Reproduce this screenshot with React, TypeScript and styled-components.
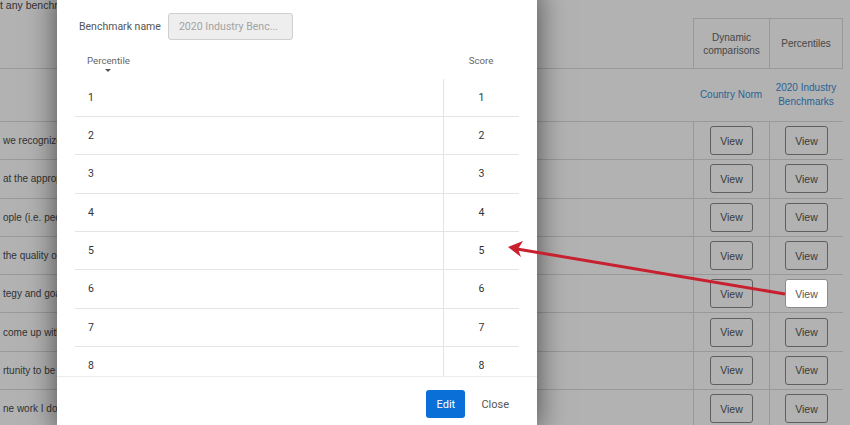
import React from 'react'
import styled, { createGlobalStyle } from 'styled-components'

const GlobalStyle = createGlobalStyle`
    body {
        margin: 0;
        overflow: hidden;
        font-family: "Liberation Sans", Arial, sans-serif;
    }
`

const Page = styled.div`
    position: relative;
    width: 850px;
    height: 425px;
    overflow: hidden;
    background: #ffffff;
`

const Intro = styled.div`
    height: 18px;
    line-height: 10px;
    font-size: 10.5px;
    color: #4a4a4a;
    white-space: nowrap;
`

const Grid = styled.div`
    display: grid;
    grid-template-columns: 693px 76px 74px;
`

const HeadRow = styled(Grid)`
    height: 51px;
    border-bottom: 1px solid #dcdcdc;
    box-sizing: border-box;
    width: 843px;
`

const HeadCell = styled.div<{ $boxed?: boolean }>`
    display: flex;
    align-items: center;
    justify-content: center;
    text-align: center;
    font-size: 10px;
    line-height: 13px;
    color: #666;
    ${(p) => p.$boxed && `
        border-top: 1px solid #dcdcdc;
        border-left: 1px solid #dcdcdc;
    `}
    &:last-child {
        border-right: 1px solid #dcdcdc;
    }
`

const LinkRow = styled(Grid)`
    height: 53px;
    width: 843px;
    border-bottom: 1px solid #dcdcdc;
    box-sizing: border-box;
`

const LinkCell = styled.div`
    display: flex;
    align-items: center;
    justify-content: center;
    text-align: center;
    font-size: 10px;
    line-height: 14px;
    color: #3b8fd6;
`

const Row = styled(Grid)`
    height: 38.3px;
    width: 843px;
    border-bottom: 1px solid #dcdcdc;
    box-sizing: border-box;
`

const TextCell = styled.div`
    display: flex;
    align-items: center;
    padding-left: 3px;
    font-size: 10px;
    color: #4a4a4a;
    white-space: nowrap;
    overflow: hidden;
`

const ViewCell = styled.div`
    display: flex;
    align-items: center;
    justify-content: center;
    border-left: 1px solid #dcdcdc;
`

const ViewButton = styled.button<{ $active?: boolean }>`
    width: 43px;
    height: 29px;
    padding: 0;
    border: 1px solid ${(p) => (p.$active ? '#8a8a8a' : '#888')};
    border-radius: 3px;
    background: #fff;
    font-family: "Liberation Sans", Arial, sans-serif;
    font-size: 10.5px;
    color: #555;
    ${(p) => p.$active && `
        position: relative;
        z-index: 2;
    `}
`

const Overlay = styled.div`
    position: absolute;
    inset: 0;
    background: rgba(0, 0, 0, 0.3);
    z-index: 1;
`

const Modal = styled.div`
    position: absolute;
    left: 57px;
    top: -10px;
    bottom: -6px;
    width: 480px;
    z-index: 3;
    background: #fff;
    box-shadow: 0 0 28px rgba(0, 0, 0, 0.6);
    display: flex;
    flex-direction: column;
    font-family: Roboto, "Noto Sans", sans-serif;
`

const NameRow = styled.div`
    display: flex;
    align-items: center;
    padding: 23px 22px 0;
`

const NameLabel = styled.label`
    font-size: 10.5px;
    color: #555;
    margin-right: 7px;
`

const NameInput = styled.div`
    width: 125px;
    height: 27px;
    box-sizing: border-box;
    padding-left: 10px;
    display: flex;
    align-items: center;
    border: 1px solid #cfcfcf;
    border-radius: 3px;
    background: #eeeeee;
    font-size: 10.6px;
    color: #a3a3a3;
`

const Table = styled.div`
    margin: 7px 18px 0;
    flex: 1;
    display: flex;
    flex-direction: column;
    min-height: 0;
`

const THead = styled.div`
    display: grid;
    grid-template-columns: 1fr 76px;
    height: 32px;
`

const Th = styled.div<{ $center?: boolean }>`
    display: flex;
    flex-direction: column;
    align-items: ${(p) => (p.$center ? 'center' : 'flex-start')};
    padding: 8px 0 0 ${(p) => (p.$center ? '0' : '12px')};
    font-size: 9.7px;
    color: #666;
`

const SortLabel = styled.span`
    display: flex;
    flex-direction: column;
    align-items: center;
    gap: 3px;
`

const SortArrow = styled.span`
    width: 0;
    height: 0;
    border-left: 3.5px solid transparent;
    border-right: 3.5px solid transparent;
    border-top: 3.5px solid #555;
`

const TBody = styled.div`
    flex: 1;
    overflow: hidden;
`

const Tr = styled.div`
    display: grid;
    grid-template-columns: 1fr 76px;
    height: 38.33px;
    border-bottom: 1px solid #e4e4e4;
    box-sizing: border-box;
    &:first-child {
        height: 38px;
    }
`

const Td = styled.div<{ $score?: boolean }>`
    display: flex;
    align-items: center;
    justify-content: ${(p) => (p.$score ? 'center' : 'flex-start')};
    padding-left: ${(p) => (p.$score ? '0' : '13px')};
    font-size: 10.5px;
    color: #333;
    ${(p) => p.$score && 'border-left: 1px solid #e4e4e4;'}
`

const Footer = styled.div`
    height: 54px;
    flex: none;
    border-top: 1px solid #ececec;
    display: flex;
    align-items: center;
    justify-content: flex-end;
    padding-right: 16px;
    gap: 4px;
`

const EditButton = styled.button`
    width: 39px;
    height: 28px;
    border: none;
    border-radius: 3px;
    background: #0b6fd8;
    color: #fff;
    font-family: Roboto, "Noto Sans", sans-serif;
    font-size: 11px;
    padding: 0;
`

const CloseButton = styled.button`
    border: none;
    background: none;
    padding: 0 12px;
    height: 28px;
    font-family: Roboto, "Noto Sans", sans-serif;
    font-size: 11px;
    color: #555;
`

const Arrow = styled.svg`
    position: absolute;
    inset: 0;
    z-index: 4;
    pointer-events: none;
`

const statements = [
    ' we recognize high performers',
    ' at the appropriate level',
    'ople (i.e. people leaders)',
    ' the quality of work',
    'tegy and goals',
    ' come up with new ideas',
    'rtunity to be innovative',
    'ne work I do',
]

const percentiles = [1, 2, 3, 4, 5, 6, 7, 8, 9, 10]

export default function App() {
    return (
        <Page>
            <GlobalStyle />
            <Intro>t any benchmarks have been set</Intro>
            <HeadRow>
                <HeadCell />
                <HeadCell $boxed>Dynamic<br />comparisons</HeadCell>
                <HeadCell $boxed>Percentiles</HeadCell>
            </HeadRow>
            <LinkRow>
                <div />
                <LinkCell>Country Norm</LinkCell>
                <LinkCell>2020 Industry<br />Benchmarks</LinkCell>
            </LinkRow>
            {statements.map((text, i) => (
                <Row key={i}>
                    <TextCell>{text}</TextCell>
                    <ViewCell><ViewButton>View</ViewButton></ViewCell>
                    <ViewCell><ViewButton $active={i === 4}>View</ViewButton></ViewCell>
                </Row>
            ))}
            <Overlay />
            <Modal>
                <NameRow>
                    <NameLabel>Benchmark name</NameLabel>
                    <NameInput>2020 Industry Benc...</NameInput>
                </NameRow>
                <Table>
                    <THead>
                        <Th>
                            <SortLabel>Percentile<SortArrow /></SortLabel>
                        </Th>
                        <Th $center>Score</Th>
                    </THead>
                    <TBody>
                        {percentiles.map((p) => (
                            <Tr key={p}>
                                <Td>{p}</Td>
                                <Td $score>{p}</Td>
                            </Tr>
                        ))}
                    </TBody>
                </Table>
                <Footer>
                    <EditButton>Edit</EditButton>
                    <CloseButton>Close</CloseButton>
                </Footer>
            </Modal>
            <Arrow width="850" height="425" viewBox="0 0 850 425">
                <line x1="785" y1="294" x2="517" y2="249" stroke="#c8202f" strokeWidth="3" />
                <polygon points="508,247 523,241 518,249 521,257" fill="#c8202f" />
            </Arrow>
        </Page>
    )
}
